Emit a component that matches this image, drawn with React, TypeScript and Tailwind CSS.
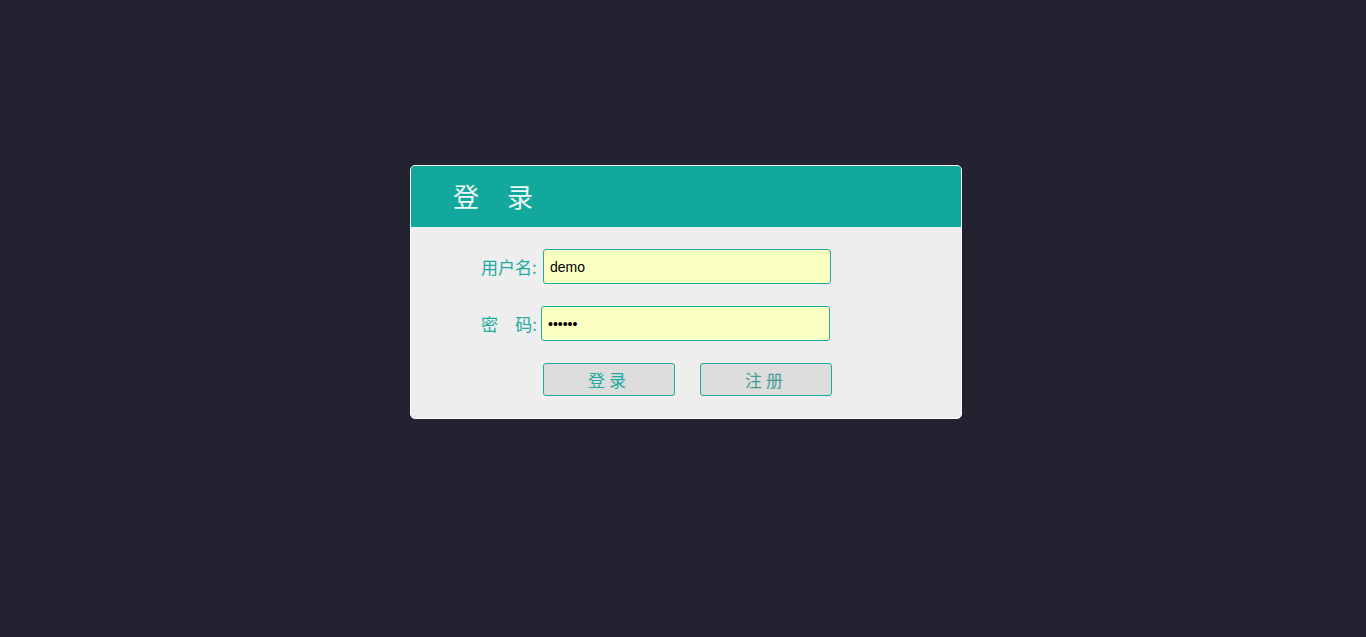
export default function App() {
  return (
    <div className="min-h-[637px] w-full bg-[#232230] pt-[165px] font-['Noto_Sans_CJK_SC',sans-serif]">
      <div className="ml-[410px] w-[552px] overflow-hidden rounded-[5px] border border-white bg-[#eeeeee]">
        <div className="flex h-[61px] items-center bg-[#12a89d] pl-[42px]">
          <h1 className="-mt-[2px] text-[26px] font-normal tracking-[28px] text-[#eef8f6]">登录</h1>
        </div>
        <form className="flex flex-col gap-[22px] pt-[22px] pb-[22px] pl-[70px]" onSubmit={(e) => e.preventDefault()}>
          <div className="flex items-center gap-[4px]">
            <label className="w-[58px] text-[17px] leading-none text-[#20aaa0]">用户名:</label>
            <input
              type="text"
              defaultValue="demo"
              className="h-[35px] w-[288px] rounded-[3px] border border-[#20aaa0] bg-[#fbffc2] px-[6px] font-['Liberation_Sans',sans-serif] text-[14px] text-black outline-none"
            />
          </div>
          <div className="flex items-center gap-[4px]">
            <label className="flex w-[56px] justify-between text-[17px] leading-none text-[#20aaa0]">
              <span>密</span>
              <span>码:</span>
            </label>
            <input
              type="password"
              defaultValue="123456"
              className="h-[35px] w-[289px] rounded-[3px] border border-[#20aaa0] bg-[#fbffc2] px-[6px] font-['Liberation_Sans',sans-serif] text-[14px] text-black outline-none"
            />
          </div>
          <div className="flex gap-[25px] pl-[62px]">
            <button className="h-[33px] w-[132px] rounded-[3px] border border-[#20aaa0] bg-[#dddddd] text-[17px] tracking-[4px] text-[#20aaa0]">
              登录
            </button>
            <button className="h-[33px] w-[132px] rounded-[3px] border border-[#20aaa0] bg-[#dddddd] text-[17px] tracking-[4px] text-[#4a9a94]">
              注册
            </button>
          </div>
        </form>
      </div>
    </div>
  );
}
